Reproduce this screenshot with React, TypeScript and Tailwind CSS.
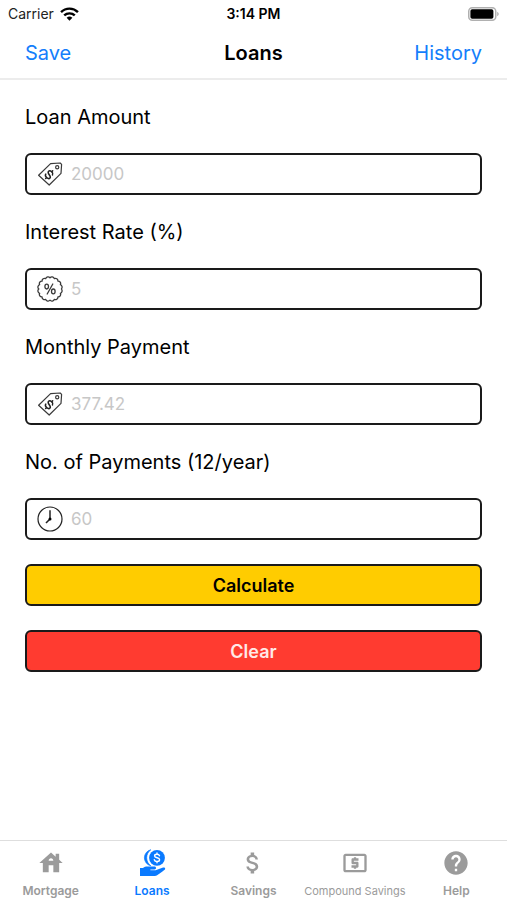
import { useState } from "react"
import type { ReactNode } from "react"
import {
  MdAttachMoney,
  MdHelp,
  MdHouse,
  MdLocalAtm,
} from "react-icons/md"

function TagIcon() {
  return (
    <svg viewBox="0 0 26 26" className="size-[26px]" fill="none" stroke="#3a3a3a" strokeWidth="1.2" strokeLinejoin="round">
      <path d="M13.6 2.6 23.2 2l1.4 1.4-.6 9L12.2 24 1.6 14.3Z" />
      <circle cx="20.2" cy="6.2" r="1.6" />
      <g transform="rotate(42 12.2 13.6)" stroke="#222" strokeWidth="1.5" strokeLinecap="round">
        <path d="M14.9 11.7c-.2-1.3-1.3-1.9-2.7-1.9-1.5 0-2.7.7-2.7 1.9 0 2.7 5.6 1.2 5.6 3.9 0 1.2-1.2 1.9-2.8 1.9-1.7 0-2.8-.7-3-2" />
        <path d="M12.2 8.4v1.2M12.2 17.7v1.2" />
      </g>
    </svg>
  )
}

// 16 small outward arcs around a ring
const scallops = Array.from({ length: 17 }, (_, i) => {
  const a = (i / 16) * Math.PI * 2
  const x = (13 + 11.2 * Math.cos(a)).toFixed(2)
  const y = (13 + 11.2 * Math.sin(a)).toFixed(2)
  return i === 0 ? `M${x} ${y}` : `A2.5 2.5 0 0 1 ${x} ${y}`
}).join("")

function PercentIcon() {
  return (
    <svg viewBox="0 0 26 26" className="size-[26px]" fill="none" stroke="#3a3a3a" strokeWidth="1.3">
      <path d={scallops} strokeLinejoin="round" />
      <ellipse cx="9.7" cy="10.6" rx="1.8" ry="2.4" />
      <ellipse cx="16.3" cy="15.4" rx="1.8" ry="2.4" />
      <path d="m15.8 8-5.6 10" strokeLinecap="round" />
    </svg>
  )
}

function ClockIcon() {
  return (
    <svg viewBox="0 0 26 26" className="size-[26px]" fill="none" stroke="#222" strokeWidth="1.2">
      <circle cx="13" cy="13" r="12" />
      <path d="M13 4.2V13" strokeWidth="1.5" />
      <path d="m13 13-4 4" strokeWidth="1.6" />
      <circle cx="13" cy="13" r="1.5" fill="#000" stroke="none" />
    </svg>
  )
}

function LoanIcon() {
  return (
    <svg viewBox="0 0 28 28" className="size-7" fill="currentColor">
      <circle cx="19" cy="8.8" r="7.9" />
      <path d="M12.8.8A8.2 8.2 0 0 0 12.8 16.8 9.8 9.8 0 0 1 12.8.8Z" stroke="currentColor" strokeWidth=".7" />
      <path
        d="M21.5 6.7c-.3-1-1.2-1.5-2.5-1.5-1.4 0-2.4.6-2.4 1.7 0 2.4 5 1.3 5 3.8 0 1.1-1 1.8-2.6 1.8-1.4 0-2.4-.6-2.7-1.7M19 3.9v1M19 12.8v1"
        fill="none"
        stroke="#fff"
        strokeWidth="1.4"
        strokeLinecap="round"
      />
      <path d="M2 19h3c1.5-1.1 2.6-1.4 4.2-1.4h7.2c2.2 0 2.2 2.8 0 2.8h-4v.9h5.2l6.8-2.5c2.4-.9 3.8.8 1.9 2.3-2.6 2-4.6 3.8-7.2 5.2-.7.4-1.4.6-2.4.6H2Z" />
    </svg>
  )
}

function StatusBar() {
  return (
    <div className="grid h-7 grid-cols-3 items-center px-2 text-sm">
      <div className="flex items-center gap-[6px] text-[#222]">
        Carrier
        <svg viewBox="0 0 18 13" className="h-[14px] w-[19px]" fill="none" stroke="#000" strokeWidth="2.3">
          <path d="M1 4.7a11.4 11.4 0 0 1 16 0" />
          <path d="M4 7.9a7.2 7.2 0 0 1 10 0" />
          <path d="M9 13 6.3 10.1a4 4 0 0 1 5.4 0Z" fill="#000" stroke="none" />
        </svg>
      </div>
      <div className="text-center font-semibold">3:14 PM</div>
      <svg viewBox="0 0 31 14" className="h-[14px] w-[31px] justify-self-end">
        <rect x=".75" y=".75" width="27" height="12.5" rx="3.5" fill="#fff" stroke="#b0b0b0" strokeWidth="1.5" />
        <rect x="2.4" y="2.2" width="23" height="9.6" rx="1.8" />
        <path d="M29.2 4.8c2 .8 2 3.6 0 4.4Z" fill="#b0b0b0" />
      </svg>
    </div>
  )
}

const fields: { id: string; label: string; placeholder: string; icon: ReactNode }[] = [
  { id: "amount", label: "Loan Amount", placeholder: "20000", icon: <TagIcon /> },
  { id: "rate", label: "Interest Rate (%)", placeholder: "5", icon: <PercentIcon /> },
  { id: "payment", label: "Monthly Payment", placeholder: "377.42", icon: <TagIcon /> },
  { id: "count", label: "No. of Payments (12/year)", placeholder: "60", icon: <ClockIcon /> },
]

const tabs = [
  { label: "Mortgage", icon: <MdHouse className="size-7" /> },
  { label: "Loans", icon: <LoanIcon />, active: true },
  { label: "Savings", icon: <MdAttachMoney className="size-7" /> },
  { label: "Compound Savings", icon: <MdLocalAtm className="size-7" />, long: true },
  { label: "Help", icon: <MdHelp className="size-7" /> },
]

export default function App() {
  const [values, setValues] = useState<Record<string, string>>({})

  return (
    <div className="flex min-h-screen flex-col bg-white font-['Inter',sans-serif] text-black">
      <header className="border-b-2 border-[#ececec]">
        <StatusBar />
        <div className="grid h-[50px] grid-cols-3 items-center px-[25px] text-xl">
          <button type="button" className="justify-self-start text-[#147efb]">
            Save
          </button>
          <h1 className="text-center font-semibold">Loans</h1>
          <button type="button" className="justify-self-end text-[#147efb]">
            History
          </button>
        </div>
      </header>

      <form className="flex flex-1 flex-col gap-6 px-[25px] py-6" onSubmit={(e) => e.preventDefault()}>
        {fields.map((f) => (
          <div key={f.id} className="flex flex-col gap-[22px]">
            <label htmlFor={f.id} className="text-xl leading-[27px]">
              {f.label}
            </label>
            <div className="flex h-[42px] items-center gap-2 rounded-md border-2 border-[#1a1a1a] px-[10px]">
              {f.icon}
              <input
                id={f.id}
                inputMode="decimal"
                placeholder={f.placeholder}
                value={values[f.id] ?? ""}
                onChange={(e) => setValues({ ...values, [f.id]: e.target.value })}
                className="min-w-0 flex-1 pt-0.5 text-[17px] outline-none placeholder:text-[#c7c7c7]"
              />
            </div>
          </div>
        ))}
        <button
          type="submit"
          className="h-[42px] rounded-md border-2 border-[#1a1a1a] bg-[#ffcc00] pt-0.5 text-lg font-semibold"
        >
          Calculate
        </button>
        <button
          type="button"
          onClick={() => setValues({})}
          className="h-[42px] rounded-md border-2 border-[#1a1a1a] bg-[#ff3b30] pt-0.5 text-lg font-semibold text-[#ffe9e7]"
        >
          Clear
        </button>
      </form>

      <nav className="grid h-[60px] grid-cols-5 border-t border-[#dedede]">
        {tabs.map((t) => (
          <a
            key={t.label}
            href="#"
            className={`flex flex-col items-center gap-1 pt-2 leading-5 whitespace-nowrap ${
              t.active ? "text-[#0a7aff]" : "text-[#9b9b9b]"
            } ${t.long ? "text-[11px]" : "text-xs font-semibold"}`}
          >
            {t.icon}
            {t.label}
          </a>
        ))}
      </nav>
    </div>
  )
}
